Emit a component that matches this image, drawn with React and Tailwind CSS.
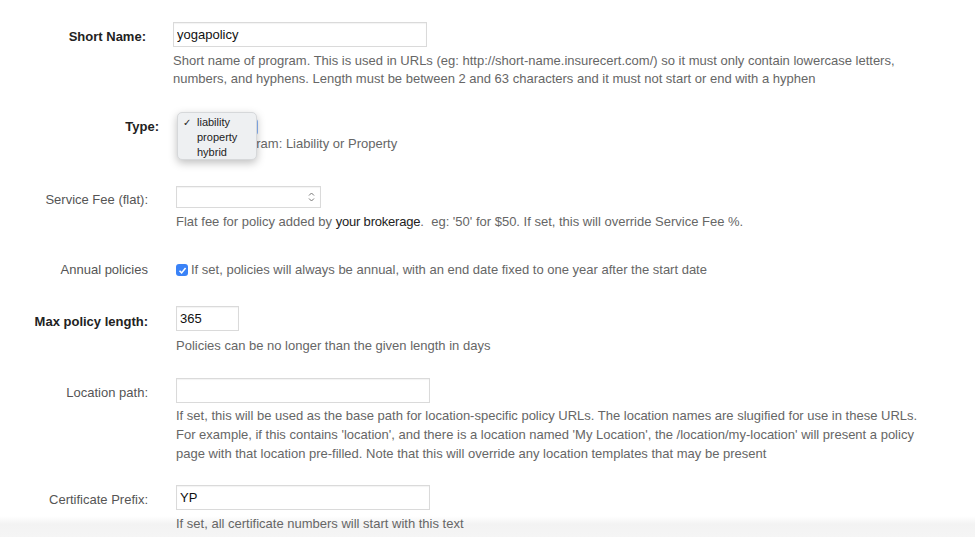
import React from 'react';

const help = 'text-[13px] leading-[18px] text-[#666]';
const inputBox = 'h-[25px] border border-[#dadada] bg-white px-[3px] text-[13px] text-[#111] shadow-[inset_0_1px_1px_rgba(0,0,0,0.05)] outline-none';

function Label({ children, bold, w = 'w-[148px]', h = 'h-[25px]', shift = '' }) {
    return (
        <div className={`${w} ${h} shrink-0 flex items-center justify-end text-[13px] ${bold ? 'font-bold text-[#222]' : 'text-[#555]'}`}>
            <span className={shift}>{children}</span>
        </div>
    );
}

function Spinner() {
    return (
        <svg width="7" height="12" viewBox="0 0 7 12" className="text-[#777]">
            <path d="M1 4.5 L3.5 2 L6 4.5" fill="none" stroke="currentColor" strokeWidth="1" />
            <path d="M1 7.5 L3.5 10 L6 7.5" fill="none" stroke="currentColor" strokeWidth="1" />
        </svg>
    );
}

function TypeSelect() {
    return (
        <div className="relative w-[82px] h-[16px]">
            <div className="absolute inset-0 rounded-[3px] border-r-[2px] border-[#8ab4f8]" />
            <div className="absolute left-[1px] top-[-7px] w-[80px] h-[48px] rounded-[5px] bg-[#eef0f2] border border-[#d6d8da] shadow-[0_3px_8px_rgba(0,0,0,0.25)] pt-[2px] text-[11px] leading-[15px] text-[#222]">
                <div className="flex"><span className="w-[19px] pl-[5px] text-[10px]">✓</span>liability</div>
                <div className="pl-[19px]">property</div>
                <div className="pl-[19px]">hybrid</div>
            </div>
        </div>
    );
}

export default function App() {
    return (
        <div className="h-[537px] overflow-hidden bg-[linear-gradient(to_bottom,#ffffff_0,#ffffff_516px,#f3f3f3_524px,#f5f5f5_537px)] font-['Liberation_Sans',Arial,sans-serif]">
            {/* Short name */}
            <div className="flex pt-[22px]">
                <Label bold w="w-[146px]" shift="mt-[4px]">Short Name:</Label>
                <div className="ml-[27px]">
                    <input readOnly value="yogapolicy" className={`${inputBox} w-[254px]`} />
                    <p className={`${help} mt-[5px]`}>
                        Short name of program. This is used in URLs (eg: http://short-name.insurecert.com/) so it must only contain lowercase letters,<br />
                        numbers, and hyphens. Length must be between 2 and 63 characters and it must not start or end with a hyphen
                    </p>
                </div>
            </div>

            {/* Type */}
            <div className="flex mt-[31px]">
                <Label bold w="w-[159px]" h="h-[16px]">Type:</Label>
                <div className="ml-[17px]">
                    <TypeSelect />
                    <p className={`${help} ml-[8px]`}>Type of program: Liability or Property</p>
                </div>
            </div>

            {/* Service fee */}
            <div className="flex mt-[33px]">
                <Label h="h-[22px]" shift="mt-[6px]">Service Fee (flat):</Label>
                <div className="ml-[28px]">
                    <div className="w-[145px] h-[22px] border border-[#dadada] bg-white flex items-center justify-end pr-[5px] shadow-[inset_0_1px_1px_rgba(0,0,0,0.05)]">
                        <Spinner />
                    </div>
                    <p className={`${help} mt-[5px]`}>
                        Flat fee for policy added by <span className="text-[#222] tracking-[-0.2px]">your brokerage</span>.&nbsp; eg: '50' for $50. If set, this will override Service Fee %.
                    </p>
                </div>
            </div>

            {/* Annual */}
            <div className="flex mt-[30px] h-[18px]">
                <Label h="h-[18px]">Annual policies</Label>
                <div className="ml-[28px] flex items-center">
                    <span className="w-[12px] h-[12px] rounded-[3px] bg-[#3a82f7] flex items-center justify-center">
                        <svg width="9" height="9" viewBox="0 0 9 9">
                            <path d="M1.5 4.8 L3.6 6.9 L7.6 2" fill="none" stroke="#fff" strokeWidth="1.6" />
                        </svg>
                    </span>
                    <span className={`${help} ml-[3px]`}>If set, policies will always be annual, with an end date fixed to one year after the start date</span>
                </div>
            </div>

            {/* Max policy length */}
            <div className="flex mt-[27px]">
                <Label bold shift="mt-[6px]">Max policy length:</Label>
                <div className="ml-[28px]">
                    <input readOnly value="365" className={`${inputBox} w-[63px]`} />
                    <p className={`${help} mt-[6px]`}>Policies can be no longer than the given length in days</p>
                </div>
            </div>

            {/* Location path */}
            <div className="flex mt-[23px]">
                <Label shift="mt-[4px]">Location path:</Label>
                <div className="ml-[28px]">
                    <input readOnly value="" className={`${inputBox} w-[254px]`} />
                    <p className="text-[13px] leading-[19px] text-[#666] mt-[3px]">
                        If set, this will be used as the base path for location-specific policy URLs. The location names are slugified for use in these URLs.<br />
                        For example, if this contains 'location', and there is a location named 'My Location', the /location/my-location' will present a policy<br />
                        page with that location pre-filled. Note that this will override any location templates that may be present
                    </p>
                </div>
            </div>

            {/* Certificate prefix */}
            <div className="flex mt-[22px]">
                <Label shift="mt-[4px]">Certificate Prefix:</Label>
                <div className="ml-[28px]">
                    <input readOnly value="YP" className={`${inputBox} w-[254px]`} />
                    <p className={`${help} mt-[5px]`}>If set, all certificate numbers will start with this text</p>
                </div>
            </div>
        </div>
    );
}
